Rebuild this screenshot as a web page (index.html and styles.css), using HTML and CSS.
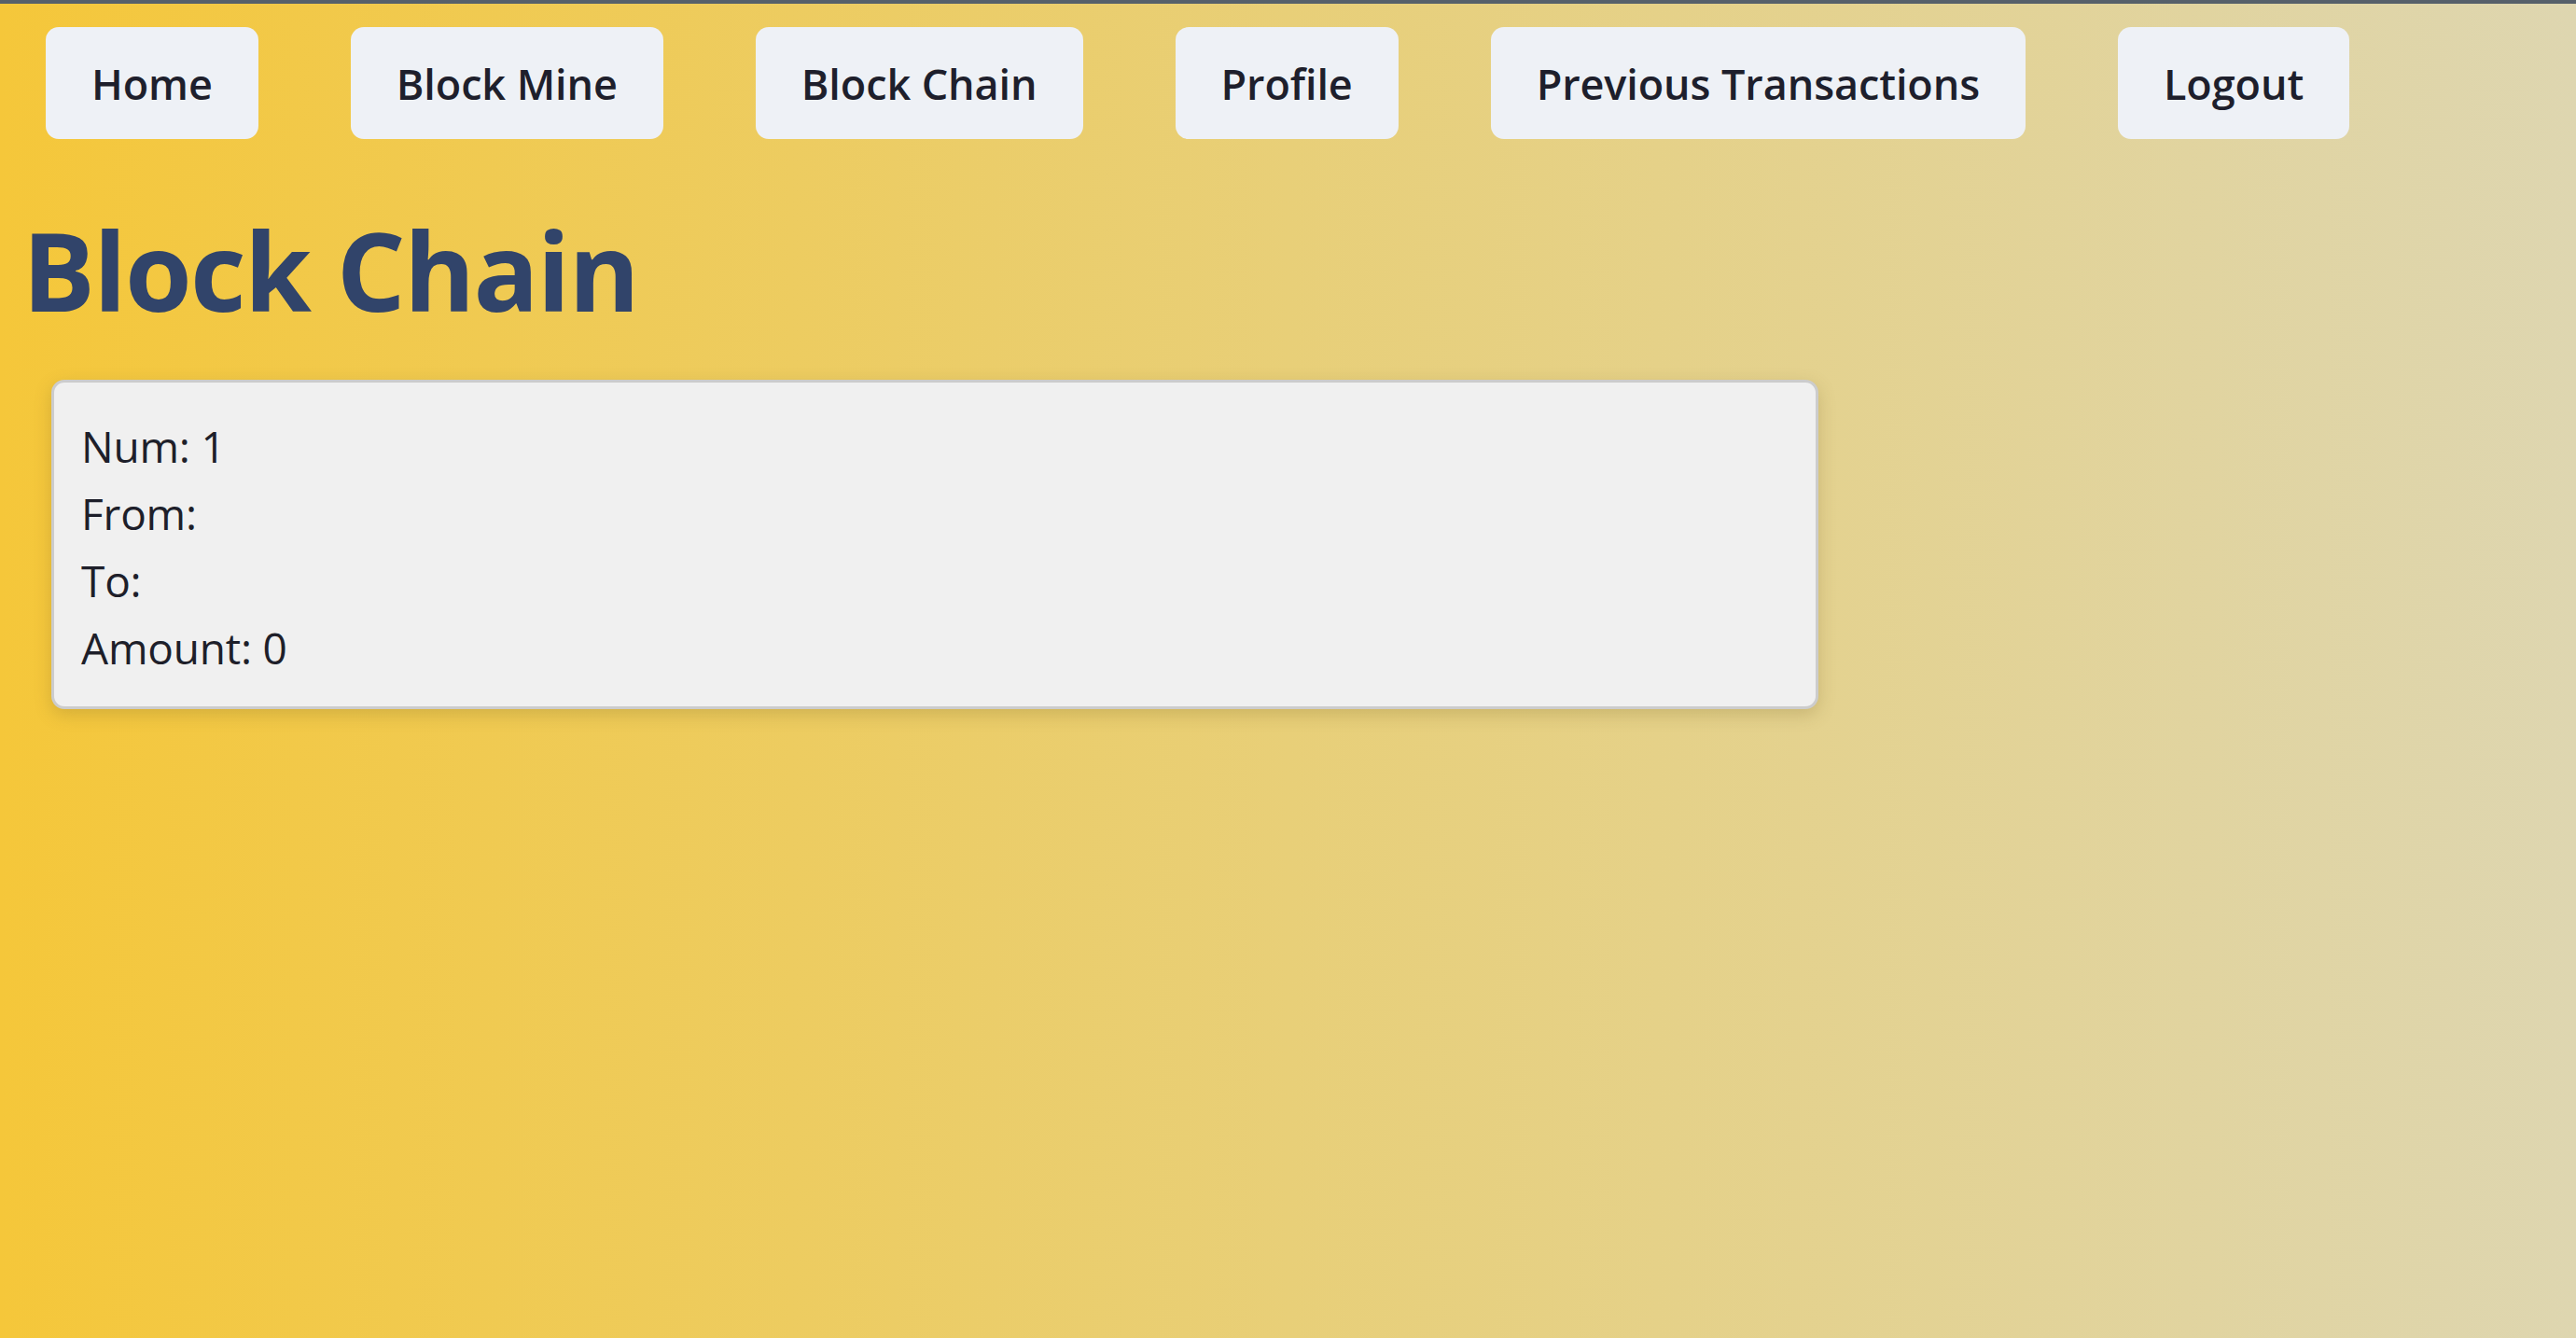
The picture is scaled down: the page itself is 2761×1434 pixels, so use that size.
FILE: index.html
```html
<!DOCTYPE html>
<html lang="en">
<head>
<meta charset="utf-8">
<title>Block Chain</title>
<link rel="stylesheet" href="styles.css">
</head>
<body>
<div class="topline"></div>
<nav class="nav">
  <a class="nav-btn" href="#">Home</a>
  <a class="nav-btn" href="#">Block Mine</a>
  <a class="nav-btn" href="#">Block Chain</a>
  <a class="nav-btn" href="#">Profile</a>
  <a class="nav-btn" href="#">Previous Transactions</a>
  <a class="nav-btn" href="#">Logout</a>
</nav>
<main class="main">
  <h1 class="title">Block Chain</h1>
  <section class="block-card">
    <div class="row">Num: 1</div>
    <div class="row">From: </div>
    <div class="row">To: </div>
    <div class="row">Amount: 0</div>
  </section>
</main>
</body>
</html>
```

FILE: styles.css
```css
html, body {
  margin: 0;
  padding: 0;
}
body {
  min-height: 100vh;
  background: linear-gradient(to right, #f5c73a 0%, #e8cf78 50%, #ded6b0 100%);
  font-family: "Open Sans", "Noto Sans", sans-serif;
  color: #1e1f2a;
}
.topline {
  height: 4px;
  background: #56606a;
}
.nav {
  display: flex;
  gap: 99px;
  padding: 25px 0 0 49px;
}
.nav-btn {
  display: flex;
  align-items: center;
  height: 120px;
  padding: 0 49px;
  box-sizing: border-box;
  background: #eef1f6;
  border-radius: 14px;
  color: #1e1f2c;
  text-decoration: none;
  font-size: 45px;
  letter-spacing: -0.1px;
  font-weight: 600;
  white-space: nowrap;
}
.main {
  padding: 0 0 0 24px;
}
.title {
  margin: 70px 0 46px 0;
  font-size: 116px;
  letter-spacing: -1.7px;
  line-height: 1.22;
  font-weight: 700;
  color: #31446a;
}
.block-card {
  margin-left: 31px;
  width: 1894px;
  height: 353px;
  box-sizing: border-box;
  padding: 32px 29px;
  background: #f0f0f0;
  border: 3px solid #cccccc;
  border-radius: 14px;
  box-shadow: 0 6px 18px rgba(120, 100, 40, 0.25);
  font-size: 46px;
  letter-spacing: -0.2px;
  line-height: 72px;
}
```
